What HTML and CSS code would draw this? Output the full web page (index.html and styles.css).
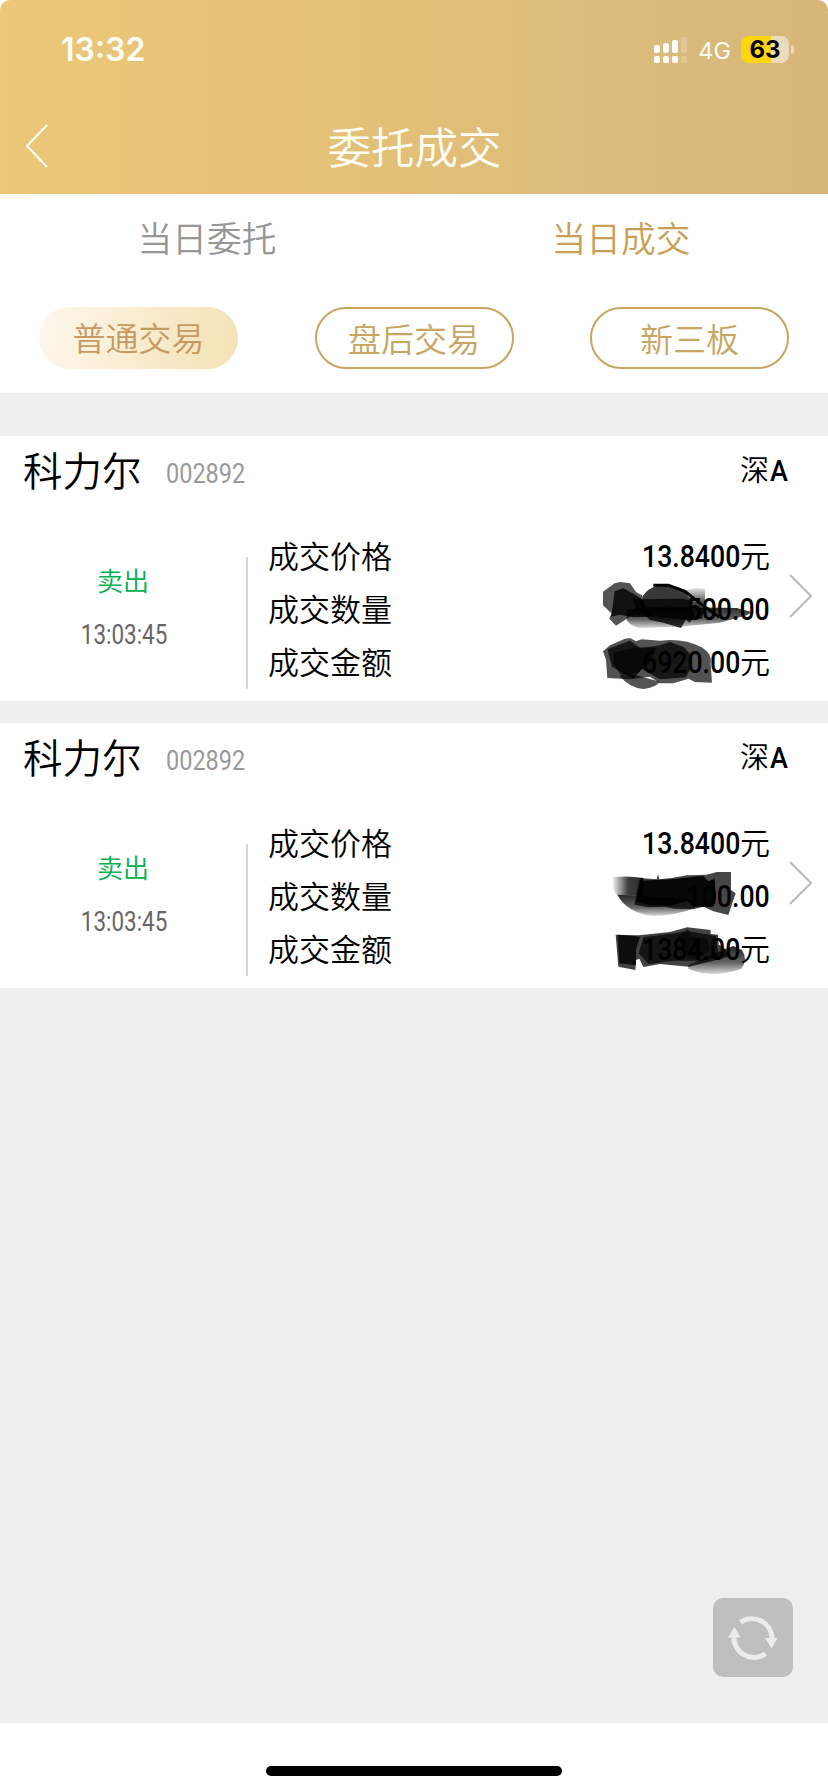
FILE: index.html
```html
<!DOCTYPE html>
<html lang="zh-CN">
<head>
    <meta charset="UTF-8">
    <meta name="viewport" content="width=device-width, initial-scale=1.0">
    <title>委托成交</title>
    <link rel="stylesheet" href="styles.css">
</head>
<body>
    <div class="screen">
        <header class="header">
            <div class="status-bar">
                <span class="clock">13:32</span>
                <div class="status-right">
                    <svg class="signal" width="34" height="27" viewBox="0 0 34 27" fill="#fff">
                        <rect x="0" y="9" width="6" height="8" rx="2"/>
                        <rect x="9" y="7" width="6" height="10" rx="2"/>
                        <rect x="18" y="4" width="6" height="13" rx="2"/>
                        <rect x="0" y="20" width="6" height="7" rx="2"/>
                        <rect x="9" y="20" width="6" height="7" rx="2"/>
                        <rect x="18" y="20" width="6" height="7" rx="2"/>
                        <rect x="27" y="1" width="6" height="16" rx="2" opacity=".2"/>
                        <rect x="27" y="20" width="6" height="7" rx="2" opacity=".2"/>
                    </svg>
                    <span class="network">4G</span>
                    <span class="battery">63</span>
                    <span class="battery-tip"></span>
                </div>
            </div>
            <div class="nav">
                <svg class="back" width="24" height="46" viewBox="0 0 24 46" fill="none" stroke="#fffdf0" stroke-width="2.2">
                    <path d="M22 2L2 23L22 44"/>
                </svg>
                <h1>委托成交</h1>
            </div>
        </header>

        <section class="filters">
            <div class="tabs">
                <a class="tab">当日委托</a>
                <a class="tab active">当日成交</a>
            </div>
            <div class="pills">
                <button class="pill selected">普通交易</button>
                <button class="pill">盘后交易</button>
                <button class="pill">新三板</button>
            </div>
        </section>

        <main class="list">
            <article class="card">
                <div class="card-head">
                    <h2>科力尔</h2>
                    <span class="code">002892</span>
                    <span class="market">深<b>A</b></span>
                </div>
                <div class="card-body">
                    <div class="side">
                        <span class="action">卖出</span>
                        <span class="time">13:03:45</span>
                    </div>
                    <dl class="details">
                        <div><dt>成交价格</dt><dd><span class="num">13.8400</span>元</dd></div>
                        <div><dt>成交数量</dt><dd><span class="num">500.00</span></dd></div>
                        <div><dt>成交金额</dt><dd><span class="num">6920.00</span>元</dd></div>
                    </dl>
                    <svg class="arrow" width="24" height="46" viewBox="0 0 24 46" fill="none" stroke="#b9b9b9" stroke-width="2">
                        <path d="M1 2L22 23L1 44"/>
                    </svg>
                </div>
                <svg class="scribble" viewBox="0 0 744 570">
                    <defs>
                        <linearGradient id="fadeRight">
                            <stop offset="0" stop-color="#000" stop-opacity=".05"/>
                            <stop offset=".5" stop-color="#000" stop-opacity=".75"/>
                            <stop offset="1" stop-color="#000" stop-opacity=".85"/>
                        </linearGradient>
                        <linearGradient id="fadeUp" x1="0" y1="0" x2="0" y2="1">
                            <stop offset="0" stop-color="#000" stop-opacity=".1"/>
                            <stop offset="1" stop-color="#000" stop-opacity=".75"/>
                        </linearGradient>
                        <linearGradient id="fadeDown" x1="0" y1="0" x2="0" y2="1">
                            <stop offset="0" stop-color="#000" stop-opacity=".85"/>
                            <stop offset=".6" stop-color="#000" stop-opacity=".6"/>
                            <stop offset="1" stop-color="#000" stop-opacity=".15"/>
                        </linearGradient>
                    </defs>
                    <path d="M140 270Q220 255 330 262L470 264L515 276L500 286L420 308L300 320L180 324Q150 318 140 300Z" fill="url(#fadeDown)"/>
                    <path d="M69 215L104 190L120 186L150 190L168 216L186 226L190 270L150 290L108 317L88 296L94 280L69 256Z" fill="#000" opacity=".67"/>
                    <path d="M104 214L130 205L158 220L184 236L215 290L160 292L120 284L94 290Z" fill="#000" opacity=".8"/>
                    <path d="M188 228Q205 204 230 198L280 198Q315 204 330 238L345 290L328 308L318 298L303 324L250 308L210 300L180 270Z" fill="#000" opacity=".78"/>
                    <path d="M160 238L310 236L360 250L372 270L366 296L330 300L220 290L170 284Z" fill="#000" opacity=".75"/>
                    <path d="M318 210L345 204L375 206V252L330 240Z" fill="url(#fadeUp)"/>
                    <path d="M220 196L265 196L315 214L360 250L418 292" fill="none" stroke="#000" stroke-width="9"/>
                    <path d="M130 455L240 485Q228 502 190 507Q145 502 120 468Z" fill="#000" opacity=".67"/>
                    <path d="M69 394L90 376L135 356L150 354L168 364L185 358L240 362L270 360Q325 360 365 382Q398 402 392 432L396 488L344 486L326 476L280 490L240 490L210 470L150 478L82 474L78 420Z" fill="#000" opacity=".68"/>
                    <path d="M82 388L150 362L182 385L240 376L270 366L312 382L330 402L334 440L318 472L240 478L185 446L160 476L96 440Z" fill="#000" opacity=".72"/>
                    <path d="M104 396L180 382L230 384L206 430L176 458L120 462L100 430Z" fill="#000" opacity=".65"/>
                </svg>
            </article>

            <article class="card">
                <div class="card-head">
                    <h2>科力尔</h2>
                    <span class="code">002892</span>
                    <span class="market">深<b>A</b></span>
                </div>
                <div class="card-body">
                    <div class="side">
                        <span class="action">卖出</span>
                        <span class="time">13:03:45</span>
                    </div>
                    <dl class="details">
                        <div><dt>成交价格</dt><dd><span class="num">13.8400</span>元</dd></div>
                        <div><dt>成交数量</dt><dd><span class="num">100.00</span></dd></div>
                        <div><dt>成交金额</dt><dd><span class="num">1384.00</span>元</dd></div>
                    </dl>
                    <svg class="arrow" width="24" height="46" viewBox="0 0 24 46" fill="none" stroke="#b9b9b9" stroke-width="2">
                        <path d="M1 2L22 23L1 44"/>
                    </svg>
                </div>
                <svg class="scribble" viewBox="0 -9 744 570">
                    <path d="M98 202Q140 196 190 204L190 258L112 256Q96 244 98 202Z" fill="url(#fadeRight)"/>
                    <path d="M112 254L190 258L340 270L345 294Q290 316 220 318Q140 308 112 254Z" fill="url(#fadeDown)"/>
                    <path d="M180 204L230 208L234 192L238 208L275 204L320 196L380 194L410 186L453 186V240L467 250L445 315L400 304L370 290L340 298L282 296L255 290L205 292L163 284Z" fill="#000" opacity=".72"/>
                    <path d="M180 212L270 208L370 198L384 214L404 206L408 260L400 290L340 290L320 272L272 288L210 286L168 276Z" fill="#000" opacity=".9"/>
                    <path d="M325 466Q400 430 460 408L486 420Q505 450 484 476Q440 492 390 492Q350 488 325 476Z" fill="url(#fadeDown)"/>
                    <path d="M107 374L174 376L192 374L270 366L322 352L392 360V372L414 374L416 404Q440 410 444 440L400 452L326 470L240 462L190 471L178 446L168 450L166 480L115 470Z" fill="#000" opacity=".74"/>
                    <path d="M113 374L180 380L168 420L168 466L118 460Z" fill="#000" opacity=".8"/>
                    <path d="M190 382L250 374L328 364L408 378L416 440L370 452L280 452L206 462L176 430Z" fill="#000" opacity=".68"/>
                    <path d="M292 382L324 356L334 380L380 384L390 420L352 448L322 440Z" fill="#000" opacity=".5"/>
                </svg>
            </article>
        </main>

        <button class="refresh" aria-label="刷新">
            <svg width="50" height="46" viewBox="0 0 50 46" fill="none" stroke="#ececec" stroke-width="5">
                <path d="M12.500 7.300A20 20 0 0 1 44 24"/>
                <path d="M37.500 38.700A20 20 0 0 1 6 20"/>
                <path d="M37 23H49.500L43.500 33.500Z" fill="#ececec" stroke="none"/>
                <path d="M0 22.500H12.500L6.500 12Z" fill="#ececec" stroke="none"/>
            </svg>
        </button>

        <footer class="home-area">
            <div class="home-bar"></div>
        </footer>
    </div>
</body>
</html>
```
FILE: styles.css
```css
* {
    box-sizing: border-box;
}

body {
    margin: 0;
    background: #fff;
    color: #000;
    font-family: "Noto Sans CJK SC", sans-serif;
    font-weight: 350;
}

h1, h2, dl, dd {
    margin: 0;
    font-weight: inherit;
}

.screen {
    position: relative;
    display: flex;
    flex-direction: column;
    width: 828px;
    height: 1792px;
    overflow: hidden;
}

/* header */
.header {
    height: 194px;
    background: linear-gradient(90deg, #ebc878 0%, #e0be78 60%, #dcbd7b 67%, #d6b779 100%);
    border-radius: 10px 10px 0 0;
    color: #fffdf5;
}

.status-bar {
    display: flex;
    justify-content: space-between;
    align-items: center;
    height: 99px;
    padding: 0 34px 0 61px;
    font-family: Inter, sans-serif;
}

.clock {
    font-size: 32px;
    font-weight: 600;
}

.status-right {
    display: flex;
    align-items: center;
}

.network {
    margin: 2px 10px 0 10px;
    font-size: 23.5px;
    font-weight: 400;
}

.battery {
    width: 48px;
    height: 27px;
    border-radius: 8px;
    background: linear-gradient(90deg, #fbd50f 62%, #eadcba 62%);
    color: #000;
    font-size: 24px;
    font-weight: 700;
    line-height: 27px;
    text-align: center;
}

.battery-tip {
    width: 3px;
    height: 9px;
    margin-left: 2px;
    border-radius: 0 4px 4px 0;
    background: #eadcba;
}

.nav {
    display: grid;
    grid-template-columns: 24px 1fr 24px;
    align-items: center;
    height: 94px;
    padding: 0 25px;
}

.nav h1 {
    padding-left: 1px;
    font-size: 43.5px;
    line-height: 60px;
    text-align: center;
}

/* tabs and pills */
.filters {
    height: 199px;
}

.tabs {
    display: flex;
    height: 113px;
}

.tab {
    flex: 1;
    padding-top: 18px;
    color: #969696;
    font-size: 34.7px;
    line-height: 50px;
    text-align: center;
}

.tab.active {
    color: #c99f58;
}

.pills {
    display: flex;
    justify-content: space-between;
    padding: 0 39px;
}

.pill {
    width: 199px;
    height: 62px;
    padding: 0;
    border: 2px solid #c8a561;
    border-radius: 31px;
    background: #fff;
    color: #c8a561;
    font: inherit;
    font-size: 33px;
    line-height: 57px;
}

.pill.selected {
    padding-bottom: 2px;
    border: none;
    background: linear-gradient(100deg, #fef7ed, #f8eac9 60%, #f3e2b5);
    color: #c59b65;
}

/* trade list */
.list {
    flex: 1;
    display: flex;
    flex-direction: column;
    gap: 22px;
    padding-top: 43px;
    background: #efefef;
}

.card {
    position: relative;
    height: 265px;
    background: #fff;
}

.card-head {
    display: flex;
    align-items: center;
    height: 66px;
    padding: 0 39px 0 23px;
}

.card-head h2 {
    font-size: 39.5px;
    line-height: 60px;
}

.code, .time, .num, .market b {
    display: inline-block;
    font-family: Roboto, sans-serif;
}

.code {
    margin: 10px 0 0 24px;
    color: #999;
    font-size: 27px;
    font-weight: 400;
    transform: scaleX(0.87);
    transform-origin: left;
}

.market {
    margin-left: auto;
    font-size: 29px;
    line-height: 40px;
}

.market b {
    font-size: 30px;
    font-weight: 500;
    transform: scaleX(0.9);
}

.card-body {
    display: flex;
    height: 199px;
    padding: 26px 15px 0 0;
}

.side {
    display: flex;
    flex-direction: column;
    align-items: center;
    width: 248px;
    height: 132px;
    margin-top: 29px;
    border-right: 2px solid #d5d5d5;
}

.action {
    margin-top: 4px;
    color: #00b04d;
    font-size: 26px;
    line-height: 38px;
}

.time {
    margin: 17px 0 0 2px;
    color: #666;
    font-size: 27px;
    font-weight: 400;
    line-height: 38px;
    transform: scaleX(0.83);
}

.details {
    flex: 1;
    padding-left: 20px;
    font-size: 31px;
    line-height: 53px;
}

.details div {
    display: flex;
    justify-content: space-between;
    height: 53px;
}

.num {
    font-size: 31px;
    font-weight: 500;
    transform: scaleX(0.86);
    transform-origin: right;
}

.details dd {
    font-size: 30px;
}

.arrow {
    margin: 45px 0 0 19px;
}

/* hand-drawn strokes hiding the amounts */
.scribble {
    position: absolute;
    top: 84px;
    right: 0;
    width: 248px;
    height: 190px;
}

/* floating refresh button */
.refresh {
    position: absolute;
    right: 35px;
    bottom: 115px;
    display: flex;
    justify-content: center;
    align-items: center;
    width: 80px;
    height: 79px;
    padding: 0;
    border: none;
    border-radius: 10px;
    background: #bfbfbf;
}

.home-area {
    display: flex;
    justify-content: center;
    height: 69px;
    padding-top: 43px;
}

.home-bar {
    width: 296px;
    height: 10px;
    border-radius: 5px;
    background: #000;
}
```
